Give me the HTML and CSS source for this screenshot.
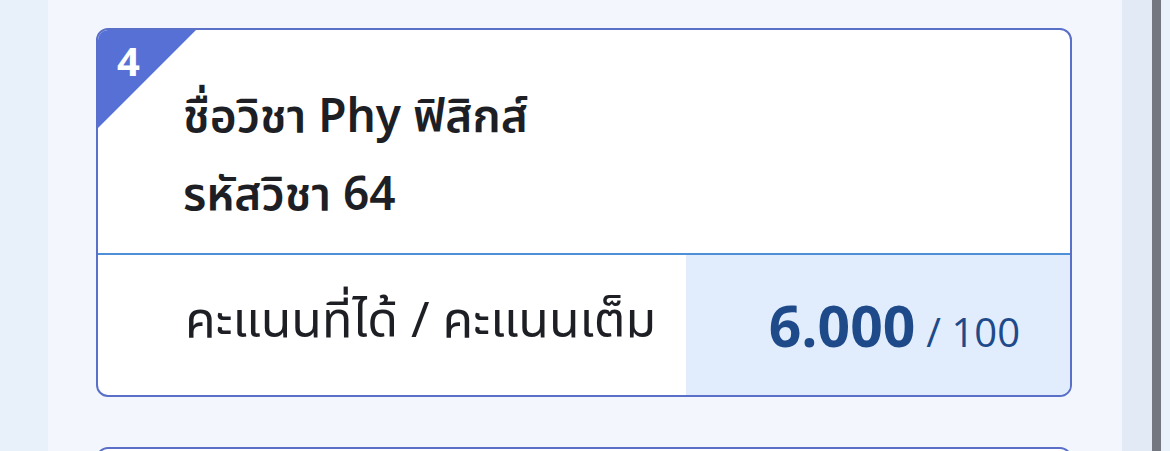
FILE: index.html
```html
<!DOCTYPE html>
<html lang="th">
<head>
    <meta charset="utf-8">
    <title>ผลคะแนนรายวิชา</title>
    <link rel="stylesheet" href="styles.css">
</head>
<body>
    <div class="page">
        <div class="gutter"></div>
        <div class="main">
            <div class="card">
                <div class="corner"><span class="corner-num">4</span></div>
                <div class="card-head">
                    <p class="subject">ชื่อวิชา Phy ฟิสิกส์</p>
                    <p class="subject">รหัสวิชา 64</p>
                </div>
                <div class="card-score">
                    <div class="score-label">คะแนนที่ได้ / คะแนนเต็ม</div>
                    <div class="score-value"><b>6.000</b> <span>/ 100</span></div>
                </div>
            </div>
            <div class="card card-next"></div>
        </div>
        <div class="rail"></div>
        <div class="scrollbar"></div>
        <div class="edge"></div>
    </div>
</body>
</html>
```

FILE: styles.css
```css
body {
    margin: 0;
    font-family: "Noto Sans", "Noto Sans Thai", "Open Sans", sans-serif;
    color: #1d1f24;
    overflow: hidden;
}

.page {
    display: grid;
    grid-template-columns: 48px 1fr 30px 9px 9px;
    height: 451px;
    overflow: hidden;
    background: #e8f0fa;
}

.main {
    min-width: 0;
    overflow: hidden;
    background: #f3f7fd;
    padding: 28px 50px 0 48px;
    display: flex;
    flex-direction: column;
    gap: 50px;
}

.rail {
    background: #e2eaf5;
}

.scrollbar {
    background: #73777f;
}

.edge {
    background: #e9f1fb;
}

.card {
    position: relative;
    border: 2px solid #5a70c8;
    border-radius: 12px;
    background: #fff;
    overflow: hidden;
    flex: none;
}

.card-next {
    height: 20px;
}

/* blue triangle with the card number */
.corner {
    position: absolute;
    top: 0;
    left: 0;
    width: 98px;
    height: 98px;
    background: #5670d6;
    clip-path: polygon(0 0, 100% 0, 0 100%);
}

.corner-num {
    position: absolute;
    left: 19px;
    top: 9px;
    color: #fff;
    font-weight: 700;
    font-size: 40px;
    line-height: 44px;
}

.card-head {
    height: 225px;
    padding-left: 85px;
    box-sizing: border-box;
    padding-top: 52px;
    border-bottom: 2px solid #4f8fd8;
}

.subject {
    margin: 0 0 14px;
    font-size: 46px;
    line-height: 64px;
    font-weight: 600;
}

.card-score {
    display: flex;
    height: 140px;
}

.score-label {
    flex: 1;
    display: flex;
    align-items: center;
    padding: 0 0 6px 87px;
    font-size: 50px;
}

.score-value {
    width: 384px;
    box-sizing: border-box;
    background: #e1edfc;
    display: flex;
    align-items: baseline;
    justify-content: flex-end;
    gap: 11px;
    padding: 38px 50px 0 0;
    color: #1e4a8a;
}

.score-value b {
    font-family: "Open Sans", sans-serif;
    font-size: 57px;
    line-height: 64px;
    font-weight: 700;
}

.score-value span {
    font-family: "Open Sans", sans-serif;
    font-size: 40px;
}
```
